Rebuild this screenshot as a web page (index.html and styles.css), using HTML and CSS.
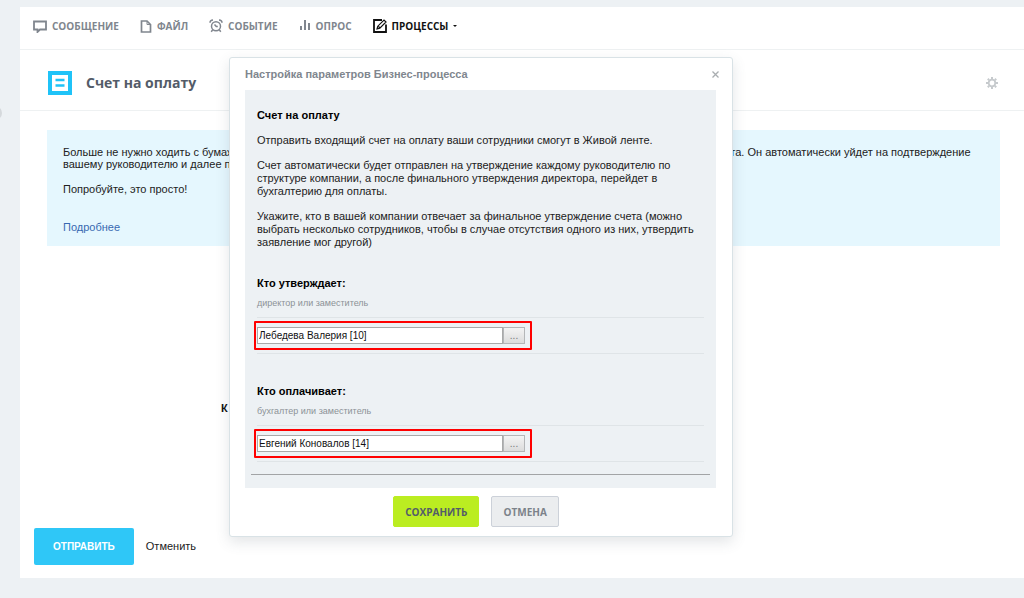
FILE: index.html
```html
<!DOCTYPE html>
<html lang="ru">
<head>
  <meta charset="UTF-8" />
  <meta name="viewport" content="width=device-width, initial-scale=1" />
  <title>Счет на оплату</title>
  <link rel="stylesheet" href="styles.css">
</head>
<body>

  <span class="side-handle"></span>

  <main class="panel">
    <nav class="tabs">
      <a class="tab" href="#">
        <svg width="14" height="13" viewBox="0 0 14 13" fill="none" stroke="currentColor" stroke-width="1.8"><path d="M1 1.5h12v8H7L4.500 12V9.500H1z"/></svg>
        Сообщение
      </a>
      <a class="tab" href="#">
        <svg width="12" height="13" viewBox="0 0 12 13" fill="none" stroke="currentColor" stroke-width="1.700"><path d="M1.500 1H7l3.500 3.500V12h-9z"/><path d="M7 1v3.500h3.500" stroke-width="1"/></svg>
        Файл
      </a>
      <a class="tab" href="#">
        <svg width="14" height="14" viewBox="0 0 14 14" fill="none" stroke="currentColor" stroke-width="1.500"><circle cx="7" cy="7.300" r="4.500"/><path d="M1 3.800C1 2 2.200 1 4 1M13 3.800C13 2 11.800 1 10 1M3.600 11L2.200 12.800M10.400 11l1.400 1.800M5.500 5.500L7.300 7.600h1.500"/></svg>
        Событие
      </a>
      <a class="tab" href="#">
        <svg width="12" height="12" viewBox="0 0 12 12" fill="currentColor"><path d="M1 6h2v4H1zM5 0h2v10H5zM9 3h2v7H9z"/></svg>
        Опрос
      </a>
      <a class="tab tab-active" href="#">
        <svg width="14" height="14" viewBox="0 0 14 14" fill="none" stroke="currentColor" stroke-width="1.800"><path d="M9 1H1v12h12V5.500"/><path d="M4 10l.8-2.800L11 1l2 2-6.200 6.200zM5.500 7.500l1.500 1.500" stroke-width="1.200"/></svg>
        Процессы
        <span class="caret"></span>
      </a>
    </nav>

    <header class="page-head">
      <svg width="24" height="24" viewBox="0 0 24 24" fill="none" stroke="#1fc3f8"><path d="M2 2h20v20H2z" stroke-width="4"/><path d="M7.500 9h9M7.500 14.500h9" stroke-width="2.500"/></svg>
      <h1>Счет на оплату</h1>
      <button class="gear" type="button" aria-label="Настройки">
        <svg width="12" height="12" viewBox="0 0 12 12" fill="none" stroke="#c6cacd"><circle cx="6" cy="6" r="3.300" stroke-width="1.800"/><path d="M6 0v2M6 10v2M0 6h2M10 6h2M1.800 1.800l1.400 1.400M8.800 8.800l1.400 1.400M10.200 1.800L8.800 3.200M3.200 8.800l-1.400 1.400" stroke-width="2"/></svg>
      </button>
    </header>

    <section class="note">
      <p>Больше не нужно ходить с бумажным счетом на утверждение — достаточно просто заполнить форму и прикрепить к ней скан счета. Он автоматически уйдет на подтверждение вашему руководителю и далее по цепочке.</p>
      <p>Попробуйте, это просто!</p>
      <a href="#">Подробнее</a>
    </section>

    <div class="form-row">К</div>

    <div class="form-actions">
      <button class="btn-send" type="button">Отправить</button>
      <a href="#">Отменить</a>
    </div>
  </main>

  <div class="popup" role="dialog" aria-labelledby="popup-title">
    <div class="popup-head">
      <h2 id="popup-title">Настройка параметров Бизнес-процесса</h2>
      <button class="popup-close" type="button" aria-label="Закрыть">
        <svg width="7" height="7" viewBox="0 0 7 7" stroke="#a9adb0" stroke-width="1.300"><path d="M.5.500l6 6M6.500.500l-6 6"/></svg>
      </button>
    </div>

    <div class="popup-body">
      <div class="popup-text">
        <h3>Счет на оплату</h3>
        <p>Отправить входящий счет на оплату ваши сотрудники смогут в Живой ленте.</p>
        <p>Счет автоматически будет отправлен на утверждение каждому руководителю по структуре компании, а после финального утверждения директора, перейдет в бухгалтерию для оплаты.</p>
        <p>Укажите, кто в вашей компании отвечает за финальное утверждение счета (можно выбрать несколько сотрудников, чтобы в случае отсутствия одного из них, утвердить заявление мог другой)</p>
      </div>

      <div class="field">
        <label for="approver">Кто утверждает:</label>
        <p class="hint">директор или заместитель</p>
        <div class="field-row">
          <div class="picker">
            <input id="approver" type="text" value="Лебедева Валерия [10]">
            <button type="button">...</button>
          </div>
        </div>
      </div>

      <div class="field">
        <label for="payer">Кто оплачивает:</label>
        <p class="hint">бухгалтер или заместитель</p>
        <div class="field-row">
          <div class="picker">
            <input id="payer" type="text" value="Евгений Коновалов [14]">
            <button type="button">...</button>
          </div>
        </div>
      </div>

      <hr>
    </div>

    <div class="popup-actions">
      <button class="btn-save" type="button">Сохранить</button>
      <button class="btn-cancel" type="button">Отмена</button>
    </div>
  </div>

</body>
</html>
```
FILE: styles.css
```css
:root {
  --page-bg: #edf1f4;
  --line: #eef1f2;
  --muted: #80868e;
  --font-main: "Liberation Sans", Arial, sans-serif;
  --font-head: "Open Sans", Arial, sans-serif;
}

* {
  box-sizing: border-box;
}

body {
  margin: 0;
  padding: 7px 0 20px 20px;
  min-height: 100vh;
  display: flex;
  position: relative;
  background: var(--page-bg);
  font-family: var(--font-main);
  font-size: 11px;
  line-height: 13px;
  color: #222;
}

h1, h2, h3, p {
  margin: 0;
}

button {
  font-family: inherit;
  cursor: pointer;
}

.side-handle {
  position: absolute;
  left: -12px;
  top: 106px;
  width: 14px;
  height: 14px;
  border-radius: 50%;
  background: #d5d9dc;
}

.panel {
  flex: 1;
  display: flex;
  flex-direction: column;
  background: #fff;
}

/* tabs */
.tabs {
  display: flex;
  align-items: center;
  gap: 21px;
  height: 43px;
  padding: 0 13px 4px;
  border-bottom: 1px solid var(--line);
}

.tab {
  display: flex;
  align-items: center;
  gap: 5px;
  font-family: var(--font-head);
  font-size: 10px;
  font-weight: 700;
  text-transform: uppercase;
  text-decoration: none;
  color: var(--muted);
}

.tab-active {
  color: #111;
}

.caret {
  border: 2px solid transparent;
  border-top-color: #111;
  border-bottom: 0;
}

/* page title */
.page-head {
  display: flex;
  align-items: center;
  gap: 14px;
  height: 61px;
  padding: 6px 26px 0 28px;
  border-bottom: 1px solid var(--line);
}

.page-head h1 {
  font-family: var(--font-head);
  font-size: 14px;
  line-height: 20px;
  font-weight: 700;
  color: #535c69;
}

.gear {
  display: flex;
  margin-left: auto;
  padding: 0;
  border: 0;
  background: none;
}

.note {
  margin: 19px 24px 0 27px;
  padding: 16px 16px 13px;
  background: #e5f7fe;
  line-height: 12px;
}

.note p {
  margin-bottom: 13px;
}

.note a {
  display: inline-block;
  margin-top: 13px;
  color: #3869b1;
  text-decoration: none;
}

.form-row {
  margin-top: 156px;
  padding-left: 201px;
  font-weight: 700;
  color: #111;
}

.form-actions {
  display: flex;
  align-items: center;
  gap: 12px;
  margin-top: auto;
  padding: 0 14px 13px;
}

.form-actions a {
  color: #222;
  text-decoration: none;
}

.btn-send {
  height: 37px;
  padding: 0 19px;
  border: 0;
  border-radius: 2px;
  background: #2fc7f7;
  color: #fff;
  font-size: 10px;
  font-weight: 700;
  text-transform: uppercase;
}

/* popup */
.popup {
  position: absolute;
  left: 229px;
  top: 57px;
  width: 504px;
  padding: 0 16px 9px 15px;
  border: 1px solid #d9e2e6;
  border-radius: 3px;
  background: #fff;
  box-shadow: 0 5px 14px rgba(83, 92, 105, 0.16);
}

.popup-head {
  display: flex;
  align-items: center;
  justify-content: space-between;
  height: 32px;
}

.popup-head h2 {
  font-size: 11px;
  line-height: 13px;
  color: var(--muted);
}

.popup-close {
  display: flex;
  padding: 0;
  margin-right: -3px;
  border: 0;
  background: none;
}

.popup-body {
  padding: 19px 6px 13px;
  background: #edf1f4;
}

.popup-text,
.field {
  padding: 0 6px;
}

.popup-text h3 {
  font-size: 11px;
  line-height: 13px;
  color: #000;
}

.popup-text p {
  margin-top: 12px;
}

.field {
  margin-top: 31px;
}

.popup-text + .field {
  margin-top: 28px;
}

.field label {
  display: block;
  font-weight: 700;
  color: #000;
}

.hint {
  margin: 7px 0;
  font-size: 9px;
  color: #8c9297;
}

.field-row {
  display: flex;
  align-items: center;
  height: 37px;
  border-top: 1px solid #dfe4e7;
  border-bottom: 1px solid #dfe4e7;
}

.picker {
  display: flex;
  margin-left: -3px;
  padding: 4px 5px 4px 1px;
  border: 2px solid #f00;
  border-radius: 1px;
}

.picker input {
  width: 246px;
  height: 17px;
  padding: 0 1px;
  border: 1px solid #a9a9a9;
  background: #fff;
  font-family: var(--font-main);
  font-size: 10px;
  color: #111;
}

.picker button {
  width: 22px;
  height: 17px;
  padding: 0;
  border: 1px solid #b4b6b8;
  background: linear-gradient(#f3f3f3, #dcdcdc);
  font-size: 10px;
  line-height: 15px;
  color: #777;
}

.popup-body hr {
  height: 1px;
  margin: 12px 0 0;
  border: 0;
  background: #a2a4a6;
}

.popup-actions {
  display: flex;
  justify-content: center;
  gap: 12px;
  padding: 8px 9px 0 0;
}

.popup-actions button {
  height: 31px;
  padding: 0 11px;
  border: 1px solid #bbed21;
  border-radius: 2px;
  font-family: var(--font-head);
  font-size: 10px;
  font-weight: 700;
  text-transform: uppercase;
}

.popup-actions .btn-save {
  background: #bbed21;
  color: #535c69;
}

.popup-actions .btn-cancel {
  border-color: #ccd1d9;
  background: #ebedef;
  color: #7c828a;
}
```
